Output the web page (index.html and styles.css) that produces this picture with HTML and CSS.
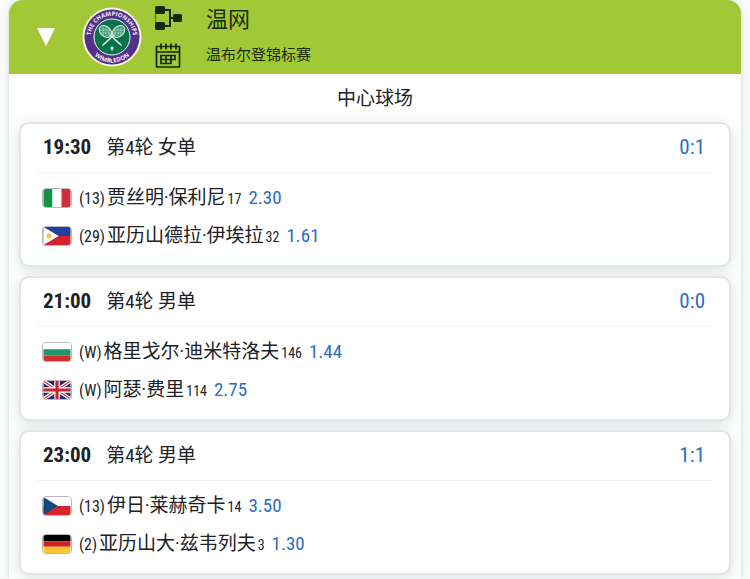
FILE: index.html
```html
<!DOCTYPE html>
<html lang="zh-CN">
<head>
<meta charset="utf-8">
<meta name="viewport" content="width=device-width, initial-scale=1">
<title>温网</title>
<link rel="stylesheet" href="styles.css">
</head>
<body>
<main class="panel">
  <header class="event">
    <button class="toggle" type="button" aria-label="收起">
      <svg width="18" height="18" viewBox="0 0 18 18"><path d="M0 0H18L9 18Z" fill="#fff"/></svg>
    </button>
    <svg class="logo" width="60" height="60" viewBox="0 0 60 60" role="img">
      <defs>
        <path id="arc-top" d="M12.500 42.200A21.300 21.300 0 1 1 47.500 42.200"/>
        <path id="arc-bottom" d="M4.500 30A25.500 25.500 0 0 0 55.500 30"/>
      </defs>
      <circle cx="30" cy="30" r="29.500" fill="#f6f3df"/>
      <circle cx="30" cy="30" r="27.500" fill="#53308a"/>
      <circle cx="30" cy="30" r="18" fill="#07734d" stroke="#f3f3f3" stroke-width="1"/>
      <text class="logo-text" text-anchor="middle"><textPath href="#arc-top" startOffset="50%">THE CHAMPIONSHIPS</textPath></text>
      <text class="logo-text" text-anchor="middle"><textPath href="#arc-bottom" startOffset="50%">WIMBLEDON</textPath></text>
      <g fill="#3f9a7a" stroke="#e6efd9" stroke-width="1">
        <ellipse cx="23.500" cy="24.500" rx="5" ry="7" transform="rotate(-50 23.500 24.500)"/>
        <ellipse cx="36.500" cy="24.500" rx="5" ry="7" transform="rotate(50 36.500 24.500)"/>
      </g>
      <g stroke="#c9e2cb" stroke-width=".5" fill="none">
        <path d="M18 23H29M18 26H29M21 19V29M24 19V31M27 21V30M31 23H42M31 26H42M33 21V30M36 19V31M39 19V29"/>
      </g>
      <path d="M28 28L39 38M32 28L21 38" stroke="#f5f5ea" stroke-width="1.400" stroke-linecap="round"/>
      <circle cx="30" cy="41" r="1.600" fill="#e4f0d2"/>
      <path d="M30 41V44" stroke="#e4f0d2"/>
    </svg>
    <nav class="shortcuts">
      <a href="#draw" aria-label="签表">
        <svg width="28" height="26" viewBox="0 0 28 26" fill="#14280a"><rect x="0" y="1" width="10" height="8" rx="1.500"/><rect x="0" y="17" width="10" height="8" rx="1.500"/><rect x="18" y="9" width="9" height="8" rx="1.500"/><path d="M9 5H15V21H9M15 13H19" fill="none" stroke="#14280a" stroke-width="2"/><path d="M.5 8V18" stroke="#14280a" stroke-width=".6"/></svg>
      </a>
      <a href="#schedule" aria-label="赛程">
        <svg width="28" height="26" viewBox="0 0 28 26" fill="none" stroke="#14280a" stroke-width="1.700"><path d="M1.500 3.500H24.500V24H1.500ZM1.500 9H24.500M6 .5V6.500M11 .5V6.500M16 .5V6.500M21 .5V6.500"/><path d="M6 12.500H20V16.500H16V20.500H6ZM6 16.500H16M11 12.500V20.500M16 12.500V16.500"/></svg>
      </a>
    </nav>
    <div class="titles">
      <h1>温网</h1>
      <p>温布尔登锦标赛</p>
    </div>
  </header>

  <h2 class="court">中心球场</h2>

  <div class="matches">
    <article class="match">
      <div class="match-head"><time>19:30</time><span class="round">第4轮 女单</span><a class="score" href="#m1">0:1</a></div>
      <ul class="players">
        <li>
          <svg class="flag" viewBox="0 0 30 20"><path fill="#169149" d="M0 0H10V20H0Z"/><path fill="#fff" d="M10 0H20V20H10Z"/><path fill="#cf2f3c" d="M20 0H30V20H20Z"/></svg>
          <span class="seed">(13)</span><span class="name">贾丝明·保利尼</span><span class="rank">17</span><a class="odds" href="#o1">2.30</a>
        </li>
        <li>
          <svg class="flag" viewBox="0 0 30 20"><path fill="#20409b" d="M0 0H30V10H0Z"/><path fill="#d3222e" d="M0 10H30V20H0Z"/><path fill="#fff" d="M0 0L17 10L0 20Z"/><circle cx="6" cy="10" r="2.500" fill="#f1bf42"/><path d="M6 6V14M2 10H10M3 7L9 13M3 13L9 7" stroke="#f1c65a" stroke-width=".8"/></svg>
          <span class="seed">(29)</span><span class="name">亚历山德拉·伊埃拉</span><span class="rank">32</span><a class="odds" href="#o2">1.61</a>
        </li>
      </ul>
    </article>

    <article class="match">
      <div class="match-head"><time>21:00</time><span class="round">第4轮 男单</span><a class="score" href="#m2">0:0</a></div>
      <ul class="players">
        <li>
          <svg class="flag" viewBox="0 0 30 20"><path fill="#fff" d="M0 0H30V7H0Z"/><path fill="#21966a" d="M0 7H30V14H0Z"/><path fill="#d02f2d" d="M0 14H30V20H0Z"/></svg>
          <span class="seed">(W)</span><span class="name">格里戈尔·迪米特洛夫</span><span class="rank">146</span><a class="odds" href="#o3">1.44</a>
        </li>
        <li>
          <svg class="flag" viewBox="0 0 30 20"><path fill="#252b6b" d="M0 0H30V20H0Z"/><path d="M0 0L30 20M30 0L0 20" stroke="#fff" stroke-width="4"/><path d="M0 0L30 20M30 0L0 20" stroke="#c92a3a" stroke-width="1.200"/><path d="M15 0V20M0 10H30" stroke="#fff" stroke-width="6"/><path d="M15 0V20M0 10H30" stroke="#cc2033" stroke-width="3.500"/></svg>
          <span class="seed">(W)</span><span class="name">阿瑟·费里</span><span class="rank">114</span><a class="odds" href="#o4">2.75</a>
        </li>
      </ul>
    </article>

    <article class="match">
      <div class="match-head"><time>23:00</time><span class="round">第4轮 男单</span><a class="score" href="#m3">1:1</a></div>
      <ul class="players">
        <li>
          <svg class="flag" viewBox="0 0 30 20"><path fill="#fff" d="M0 0H30V10H0Z"/><path fill="#d7242b" d="M0 10H30V20H0Z"/><path fill="#174680" d="M0 0L16 10L0 20Z"/></svg>
          <span class="seed">(13)</span><span class="name">伊日·莱赫奇卡</span><span class="rank">14</span><a class="odds" href="#o5">3.50</a>
        </li>
        <li>
          <svg class="flag" viewBox="0 0 30 20"><path d="M0 0H30V7H0Z"/><path fill="#d42120" d="M0 7H30V13H0Z"/><path fill="#fbc62c" d="M0 13H30V20H0Z"/></svg>
          <span class="seed">(2)</span><span class="name">亚历山大·兹韦列夫</span><span class="rank">3</span><a class="odds" href="#o6">1.30</a>
        </li>
      </ul>
    </article>
  </div>
</main>
</body>
</html>
```
FILE: styles.css
```css
* {
  box-sizing: border-box;
}

body {
  margin: 0;
  padding: 0 9px;
  background: #fafbfb;
  color: #202124;
  font-family: "Roboto Condensed", "Liberation Sans Narrow", "Noto Sans CJK SC", sans-serif;
  font-size: 19px;
}

h1, h2, p, ul {
  margin: 0;
  padding: 0;
  font-weight: 400;
}

a {
  color: #2d6cc0;
  text-decoration: none;
}

.panel {
  min-height: 100vh;
  padding-bottom: 4px;
  overflow: hidden;
  border-radius: 14px 14px 0 0;
  background: #fff;
  box-shadow: 0 0 2px #c5cfd2, 0 0 10px #e2e6e7;
}

.event {
  display: flex;
  align-items: center;
  height: 74px;
  padding: 0 28px;
  background: #a2c838;
  color: #1b2b0c;
}

.toggle {
  display: flex;
  padding: 0;
  border: 0;
  background: none;
}

.logo {
  margin-left: 27px;
}

.logo-text {
  fill: #f2edf7;
  font: 700 6px "Open Sans", sans-serif;
}

.shortcuts {
  display: flex;
  flex-direction: column;
  gap: 12px;
  margin-left: 13px;
}

.shortcuts a,
.shortcuts svg {
  display: block;
}

.titles {
  margin-left: 23px;
}

.titles h1 {
  font-size: 22px;
  line-height: 36px;
}

.titles p {
  font-size: 15px;
  line-height: 34px;
}

.court {
  padding-top: 2px;
  font-size: 19px;
  line-height: 46px;
  text-align: center;
}

.matches {
  display: grid;
  gap: 9px;
  padding: 0 10px;
}

.match {
  padding: 0 15px 10px;
  border: 2px solid #e0e5e7;
  border-radius: 10px;
  background: #fff;
  box-shadow: 0 3px 16px #dadedf;
}

.match-head {
  display: flex;
  align-items: baseline;
  height: 49px;
  padding: 0 9px 0 7px;
  border-bottom: 1px solid #f0f2f3;
  line-height: 47px;
}

.match-head time {
  font-size: 21px;
  font-weight: 700;
}

.round {
  margin-left: 15px;
}

.score {
  margin-left: auto;
  font-size: 21px;
}

.players {
  padding: 6px 6px 0;
  list-style: none;
}

.players li {
  display: flex;
  align-items: baseline;
  height: 38px;
  line-height: 38px;
}

.flag {
  align-self: center;
  width: 30px;
  height: 20px;
  border: 1px solid #b9b9b9;
  border-radius: 4px;
}

.seed {
  margin: 0 2px 0 7px;
  font-size: 16px;
}

.rank {
  margin: 0 7px 0 2px;
  font-size: 14px;
}

.odds {
  font-size: 19px;
}
```
